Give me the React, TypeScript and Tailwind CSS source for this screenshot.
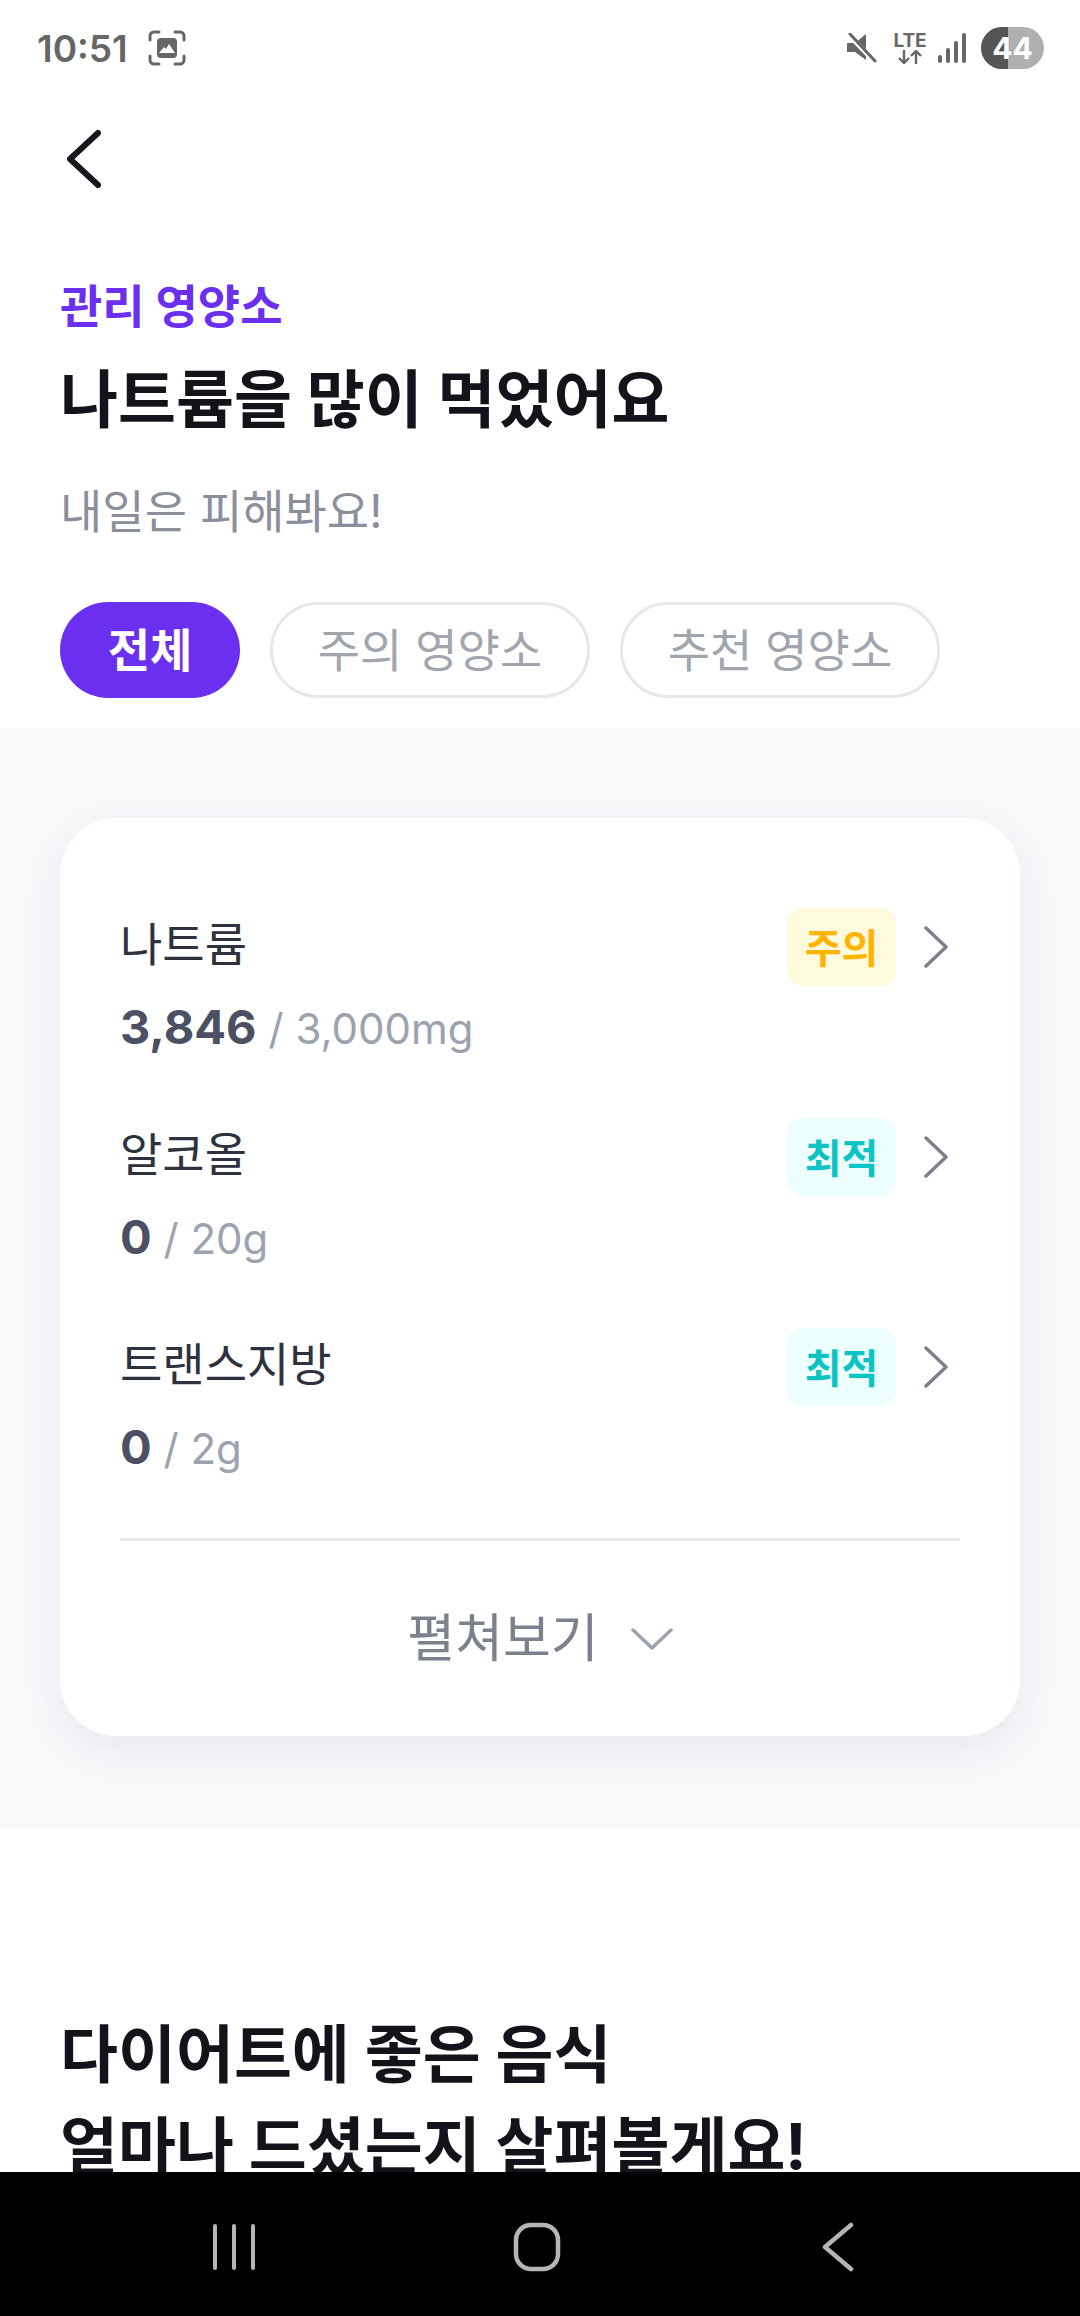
const rows = [
  { name: '나트륨', value: '3,846', goal: ' / 3,000mg', badge: '주의', badgeClass: 'bg-[#fff9dd] text-[#ffb400]' },
  { name: '알코올', value: '0', goal: ' / 20g', badge: '최적', badgeClass: 'bg-[#edfeff] text-[#0cc4c4]' },
  { name: '트랜스지방', value: '0', goal: ' / 2g', badge: '최적', badgeClass: 'bg-[#edfeff] text-[#0cc4c4]' },
]

function StatusBar() {
  return (
    <div className="flex h-[96px] items-center justify-between pl-[37px] pr-[36px] text-[#666666]">
      <div className="flex items-center gap-[20px]">
        <span className="text-[37px] font-semibold leading-none">10:51</span>
        <svg width="38" height="36" viewBox="0 0 38 36" fill="none">
          <path d="M2 10V6a4 4 0 0 1 4-4h5M27 2h5a4 4 0 0 1 4 4v4M36 26v4a4 4 0 0 1-4 4h-5M11 34H6a4 4 0 0 1-4-4v-4" stroke="#666" strokeWidth="3" strokeLinecap="round" />
          <rect x="9" y="8" width="20" height="20" rx="4" fill="#666" />
          <path d="M11 23l5-6 2 2 3-5 6 9z" fill="#fff" />
        </svg>
      </div>
      <div className="flex items-center">
        <svg width="30" height="30" viewBox="0 0 30 30" fill="none">
          <path d="M0 10h8l11-9v26l-11-8H0z" fill="#666" />
          <path d="M3 3l25 26" stroke="#fff" strokeWidth="5" />
          <path d="M3 1l25 27" stroke="#666" strokeWidth="3" strokeLinecap="round" />
        </svg>
        <div className="ml-[16px] flex w-[34px] flex-col items-center">
          <span className="text-[19px] font-bold leading-[18px]">LTE</span>
          <svg width="26" height="14" viewBox="0 0 26 14" fill="none" stroke="#666" strokeWidth="2.4">
            <path d="M7 0v12M2 8l5 5 5-5M19 14V2M14 6l5-5 5 5" />
          </svg>
        </div>
        <svg className="ml-[11px]" width="28" height="30" viewBox="0 0 28 30" fill="#666">
          <rect x="0" y="22" width="4" height="8" rx="2" />
          <rect x="8" y="15" width="4" height="15" rx="2" />
          <rect x="16" y="8" width="4" height="22" rx="2" />
          <rect x="24" y="0" width="4" height="30" rx="2" />
        </svg>
        <div className="relative ml-[15px] flex h-[42px] w-[63px] items-center justify-center overflow-hidden rounded-full bg-[#b0b0b0]">
          <div className="absolute inset-y-0 left-0 w-[27px] bg-[#555555]" />
          <span className="relative text-[30px] font-bold leading-none text-white">44</span>
        </div>
      </div>
    </div>
  )
}

function NutrientRow({ row }: { row: (typeof rows)[number] }) {
  return (
    <div className="h-[145px]">
      <div className="flex h-[78px] items-center">
        <span className="flex-1 pb-[6px] text-[46px] leading-none text-[#2e3240]">{row.name}</span>
        <span className={`flex h-[78px] w-[109px] items-center justify-center rounded-[16px] pt-[3px] text-[40px] font-bold ${row.badgeClass}`}>
          {row.badge}
        </span>
        <svg className="ml-[28px] mr-[12px]" width="24" height="42" viewBox="0 0 24 42" fill="none" stroke="#7c7f8c" strokeWidth="3.5" strokeLinecap="round" strokeLinejoin="round">
          <path d="M2 2l20 19L2 40" />
        </svg>
      </div>
      <div className="mt-[16px] text-[42px] leading-[50px] text-[#9ca3af]">
        <span className="text-[47px] font-bold text-[#4b5162]">{row.value}</span>
        {row.goal}
      </div>
    </div>
  )
}

export default function App() {
  return (
    <div
      className="relative h-[2316px] w-[1080px] overflow-hidden bg-white"
      style={{ fontFamily: 'Inter, "Noto Sans CJK KR", sans-serif' }}
    >
      <StatusBar />
      <div className="flex h-[126px] items-center pl-[66px]">
        <svg width="36" height="62" viewBox="0 0 36 62" fill="none" stroke="#14161c" strokeWidth="6" strokeLinecap="round" strokeLinejoin="round">
          <path d="M32 5L4 31l28 26" />
        </svg>
      </div>

      <div className="px-[60px] pt-[54px] pb-[30px]">
        <div className="text-[46px] font-bold leading-[60px] text-[#6b2ff0]">관리 영양소</div>
        <h1 className="mt-[28px] text-[63px] font-bold leading-[70px] text-[#12141a]">나트륨을 많이 먹었어요</h1>
        <p className="mt-[47px] text-[46px] leading-[60px] text-[#8b8f9b]">내일은 피해봐요!</p>
        <div className="mt-[61px] flex gap-[30px]">
          <button className="flex h-[96px] w-[180px] items-center justify-center rounded-full bg-[#6b2ff0] text-[46px] font-bold text-white">전체</button>
          <button className="flex h-[96px] w-[320px] items-center justify-center rounded-full border-[3px] border-[#e5e7eb] text-[46px] text-[#a0a5ae]">주의 영양소</button>
          <button className="flex h-[96px] w-[320px] items-center justify-center rounded-full border-[3px] border-[#e5e7eb] text-[46px] text-[#a0a5ae]">추천 영양소</button>
        </div>
      </div>

      <section className="bg-[#f7f8fa] px-[60px] pt-[90px] pb-[91px]">
        <div className="rounded-[56px] bg-white px-[60px] pt-[90px] shadow-[0_14px_40px_rgba(40,40,80,0.07)]">
          <div className="flex flex-col gap-[65px]">
            {rows.map((row) => (
              <NutrientRow key={row.name} row={row} />
            ))}
          </div>
          <div className="mt-[65px] h-[3px] bg-[#e9eaef]" />
          <div className="flex h-[195px] items-center justify-center gap-[32px]">
            <span className="text-[52px] leading-none text-[#7c818e]">펼쳐보기</span>
            <svg width="42" height="24" viewBox="0 0 42 24" fill="none" stroke="#9ca3af" strokeWidth="3.5" strokeLinecap="round" strokeLinejoin="round">
              <path d="M2 3l19 18L40 3" />
            </svg>
          </div>
        </div>
      </section>

      <h2 className="px-[60px] pt-[181px] text-[63px] font-bold leading-[92px] text-[#12141a]">
        다이어트에 좋은 음식
        <br />
        얼마나 드셨는지 살펴볼게요!
      </h2>

      <div className="absolute inset-x-0 bottom-0 flex h-[144px] items-center justify-between bg-black pl-[212px] pr-[226px] pt-[6px]">
        <svg width="44" height="48" viewBox="0 0 44 48" fill="none" stroke="#b5b5b5" strokeWidth="4" strokeLinecap="round">
          <path d="M3 3v42M22 3v42M41 3v42" />
        </svg>
        <svg className="-ml-[4px]" width="48" height="50" viewBox="0 0 48 50" fill="none" stroke="#b5b5b5" strokeWidth="4.5">
          <rect x="3" y="3" width="42" height="44" rx="15" />
        </svg>
        <svg width="32" height="50" viewBox="0 0 32 50" fill="none" stroke="#b5b5b5" strokeWidth="4.5" strokeLinecap="round" strokeLinejoin="round">
          <path d="M29 3L3 25l26 22" />
        </svg>
      </div>
    </div>
  )
}
